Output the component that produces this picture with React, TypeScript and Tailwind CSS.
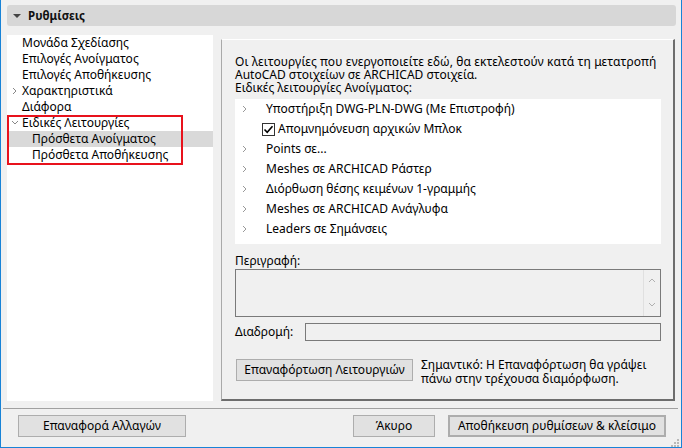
import React from "react"

const TREE = [
  { label: "Μονάδα Σχεδίασης", level: 0 },
  { label: "Επιλογές Ανοίγματος", level: 0 },
  { label: "Επιλογές Αποθήκευσης", level: 0 },
  { label: "Χαρακτηριστικά", level: 0, chevron: "right" },
  { label: "Διάφορα", level: 0 },
  { label: "Ειδικές Λειτουργίες", level: 0, chevron: "down" },
  { label: "Πρόσθετα Ανοίγματος", level: 1, selected: true },
  { label: "Πρόσθετα Αποθήκευσης", level: 1 },
]

const FEATURES = [
  { label: "Υποστήριξη DWG-PLN-DWG (Με Επιστροφή)" },
  { label: "Απομνημόνευση αρχικών Μπλοκ", checkbox: true },
  { label: "Points σε..." },
  { label: "Meshes σε ARCHICAD Ράστερ" },
  { label: "Διόρθωση θέσης κειμένων 1-γραμμής" },
  { label: "Meshes σε ARCHICAD Ανάγλυφα" },
  { label: "Leaders σε Σημάνσεις" },
]

function Chevron({ dir, className }: { dir: "right" | "down" | "up"; className?: string }) {
  const d =
    dir === "right" ? "M2 1 L5 4 L2 7"
    : dir === "down" ? "M1 2 L4 5 L7 2"
    : "M1 5 L4 2 L7 5"
  return (
    <svg width="8" height="8" viewBox="0 0 8 8" className={className}>
      <path d={d} fill="none" stroke="currentColor" strokeWidth="1" />
    </svg>
  )
}

function Button({ children, className = "" }: { children: React.ReactNode; className?: string }) {
  return (
    <div
      className={`flex h-[22px] items-center justify-center border border-[#adadad] bg-[#e1e1e1] text-[12px] text-black ${className}`}
    >
      {children}
    </div>
  )
}

export default function App() {
  return (
    <div className="flex h-[448px] w-[682px] flex-col border-b border-l border-r border-[#1883d7] bg-[#f0f0f0] font-['Noto_Sans',sans-serif] text-[12px] text-black">
      {/* Header */}
      <div className="ml-[6px] mr-[5px] mt-[5px] flex h-[22px] items-center rounded-[3px] bg-[#d7d7d7] pl-[6px]">
        <svg width="8" height="6" viewBox="0 0 8 6" className="text-[#444]">
          <path d="M0 1 L8 1 L4 5 Z" fill="currentColor" />
        </svg>
        <span className="ml-[7px] text-[11.5px] font-bold text-[#111]">Ρυθμίσεις</span>
      </div>

      <div className="ml-[6px] mr-[5px] flex h-[375px]">
        {/* Tree */}
        <div className="relative mt-[9px] h-[366px] w-[206px] bg-white">
          {TREE.map((t) => (
            <div
              key={t.label}
              className={`flex h-[16px] items-center whitespace-nowrap leading-[16px] ${t.selected ? "bg-[#d9d9d9]" : ""}`}
              style={{ paddingLeft: t.level === 1 ? 25 : 15 }}
            >
              {t.level === 0 && (
                <span className="flex w-0 items-center">
                  {t.chevron && (
                    <Chevron
                      dir={t.chevron as "right" | "down"}
                      className="-ml-[11px] text-[#888]"
                    />
                  )}
                </span>
              )}
              <span>{t.label}</span>
            </div>
          ))}
          <div className="absolute left-0 top-[80px] h-[50px] w-[176px] border-2 border-[#e8121c]" />
        </div>

        {/* Right panel */}
        <div className="ml-[8px] mt-[13px] flex h-[362px] w-[454px] flex-col border-b-2 border-l border-r-2 border-t border-b-[#6d6d6d] border-l-[#a9a9a9] border-r-[#6d6d6d] border-t-white pl-[13px] pr-[12px] pt-[15px]">
          <div className="leading-[13px]">
            <div className="whitespace-nowrap tracking-[0.1px]">
              Οι λειτουργίες που ενεργοποιείτε εδώ, θα εκτελεστούν κατά τη μετατροπή
            </div>
            <div>AutoCAD στοιχείων σε ARCHICAD στοιχεία.</div>
            <div>Ειδικές λειτουργίες Ανοίγματος:</div>
          </div>

          <div className="mt-[5px] h-[145px] bg-white">
            {FEATURES.map((f) => (
              <div key={f.label} className="flex h-[20px] items-center whitespace-nowrap">
                {f.checkbox ?
                  <>
                    <span className="ml-[27px] flex h-[13px] w-[13px] items-center justify-center border border-[#333] bg-white">
                      <svg width="11" height="11" viewBox="0 0 11 11">
                        <path d="M1.5 5.5 L4.2 8.3 L9.5 2.3" fill="none" stroke="#000" strokeWidth="1.6" />
                      </svg>
                    </span>
                    <span className="ml-[3px]">{f.label}</span>
                  </>
                : <>
                    <Chevron dir="right" className="ml-[6px] text-[#999]" />
                    <span className="ml-[17px]">{f.label}</span>
                  </>
                }
              </div>
            ))}
          </div>

          <div className="mt-[10px] leading-[14px]">Περιγραφή:</div>
          <div className="mt-[1px] flex h-[48px] border border-[#7a7a7a] bg-[#f0f0f0]">
            <div className="flex-1" />
            <div className="flex w-[17px] flex-col items-center justify-between border-l border-[#e0e0e0] py-[7px] text-[#b0b0b0]">
              <Chevron dir="up" />
              <Chevron dir="down" />
            </div>
          </div>

          <div className="mt-[6px] flex h-[18px] items-center">
            <span className="w-[70px]">Διαδρομή:</span>
            <div className="h-[18px] flex-1 border border-[#7a7a7a] bg-[#f0f0f0]" />
          </div>

          <div className="mt-[18px] flex items-start">
            <Button className="ml-[1px] w-[177px]">Επαναφόρτωση Λειτουργιών</Button>
            <div className="ml-[8px] mt-[-1px] leading-[14px]">
              <div>Σημαντικό: Η Επαναφόρτωση θα γράψει</div>
              <div>πάνω στην τρέχουσα διαμόρφωση.</div>
            </div>
          </div>
        </div>
      </div>

      {/* Separator */}
      <div className="ml-[2px] mr-[3px] mt-[7px] h-[1px] bg-[#a0a0a0]" />

      {/* Footer buttons */}
      <div className="mt-[6px] flex h-[22px] items-center">
        <Button className="ml-[17px] w-[168px]">Επαναφορά Αλλαγών</Button>
        <div className="flex-1" />
        <Button className="w-[82px]">Άκυρο</Button>
        <Button className="ml-[13px] mr-[15px] w-[218px] border-2 border-[#0078d7]">
          Αποθήκευση ρυθμίσεων &amp; κλείσιμο
        </Button>
      </div>
      <div className="flex flex-1 justify-end pr-[2px] pt-[1px]">
        <svg width="9" height="9" viewBox="0 0 9 9">
          <g fill="#b8b8b8">
            <rect x="7" y="1" width="2" height="2" />
            <rect x="4" y="4" width="2" height="2" />
            <rect x="7" y="4" width="2" height="2" />
            <rect x="1" y="7" width="2" height="2" />
            <rect x="4" y="7" width="2" height="2" />
            <rect x="7" y="7" width="2" height="2" />
          </g>
        </svg>
      </div>
    </div>
  )
}
